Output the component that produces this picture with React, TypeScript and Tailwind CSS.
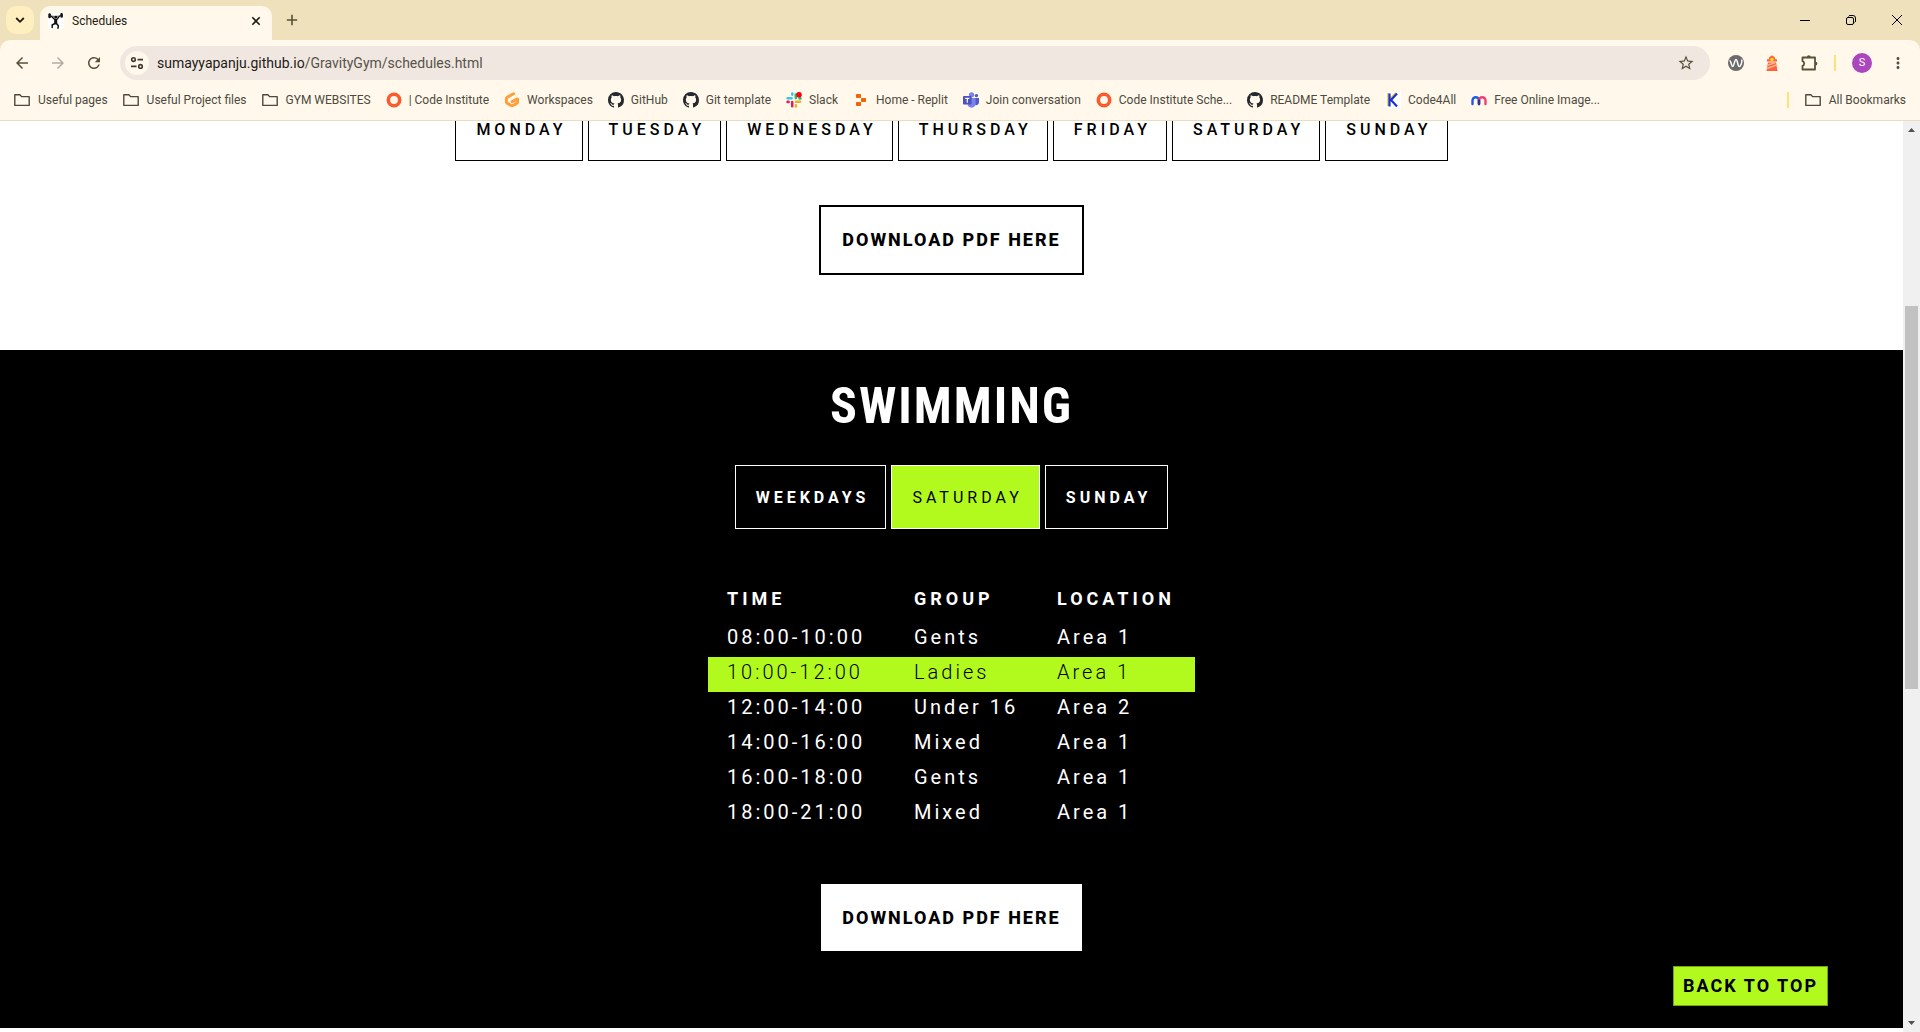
import { useState } from "react";
import type { ReactNode } from "react";
import { VscGithubInverted } from "react-icons/vsc";
import { MdArrowBack, MdArrowForward, MdRefresh, MdStarBorder, MdMoreVert } from "react-icons/md";

const GitHubMark = () => <VscGithubInverted className="size-4 text-[#24292f]" />;

const FolderIcon = () => (
  <svg viewBox="0 0 16 16" className="mr-px size-4" fill="none" stroke="#4d4a41" strokeWidth="1.4" strokeLinejoin="round">
    <path d="M.8 2.7h5.1l1.7 1.9h7.6v8.8H.8z" />
  </svg>
);

const RingIcon = () => (
  <svg viewBox="0 0 16 16" className="size-4" fill="none">
    <circle cx="8" cy="8" r="5.7" stroke="#fb5a2c" strokeWidth="3.6" />
  </svg>
);

const GitpodIcon = () => (
  <svg viewBox="0 0 16 16" className="size-4" fill="none" stroke="#ff9f3a" strokeWidth="3" strokeLinecap="round" strokeLinejoin="round">
    <path d="M9.6 1.8 3.4 5.1c-.7.4-1 .9-1 1.6v3c0 .8.4 1.3 1 1.7l3.700 2.100c.600.300 1.200.300 1.800 0l3.700-2.100c.600-.400 1-.900 1-1.700V6.900L8.200 9.600" />
  </svg>
);

const SlackIcon = () => (
  <svg viewBox="0 0 16 16" className="size-4" strokeWidth="2.6" strokeLinecap="round">
    <path d="M1.600 6.300h4M6.300 1.600v1" stroke="#36c5f0" />
    <path d="M9.800 2.500v3.600M13.600 6.400h.8" stroke="#2eb67d" />
    <path d="M10 9.800h4M9.900 13.400v1" stroke="#ecb22e" />
    <path d="M6.200 10v4.200M1.600 9.900h1" stroke="#e01e5a" />
    <circle cx="13" cy="2.800" r="2.800" fill="#fb0007" />
  </svg>
);

const ReplitIcon = () => (
  <svg viewBox="0 0 16 16" className="size-4" fill="#f26207">
    <rect x="3" y="2" width="5" height="4" rx=".8" />
    <rect x="8" y="6" width="5" height="4" rx=".8" />
    <rect x="3" y="10" width="5" height="4" rx=".8" />
  </svg>
);

const TeamsIcon = () => (
  <svg viewBox="0 0 16 16" className="size-4">
    <circle cx="8.5" cy="2.8" r="2.6" fill="#7b83eb" />
    <circle cx="13.4" cy="3.6" r="1.7" fill="#5059c9" />
    <path d="M11 6h5v4.6a2.7 2.7 0 0 1-4 2.2z" fill="#5059c9" />
    <path d="M4.500 6H12.600v5.600a4 4 0 0 1-8.100 0z" fill="#7b83eb" />
    <rect x="0" y="4" width="8.500" height="8.500" rx=".8" fill="#4b53bc" />
    <path d="M2.200 6.300h4.200M4.300 6.300v4.400" stroke="#fff" strokeWidth="1.200" />
  </svg>
);

const KIcon = () => (
  <svg viewBox="0 0 16 16" className="size-4" fill="none">
    <rect width="16" height="16" fill="#fff" />
    <path d="M3.200 1v13M4 8l7-7" stroke="#e8d21d" strokeWidth="2" />
    <path d="M4.500 1.500v13M12 1.500 6 8l6 6.500" stroke="#1a2fe0" strokeWidth="2.200" />
  </svg>
);

const MIcon = () => (
  <svg viewBox="0 0 16 16" className="size-4" fill="none" strokeWidth="2.400" strokeLinecap="round">
    <path d="M1.500 12V8.500a3.200 3.200 0 0 1 6.500 0V12" stroke="#1f5be0" />
    <path d="M8 12V8.500a3.200 3.200 0 0 1 6.500 0V12" stroke="#f43f6e" />
    <path d="M8 12V8.500" stroke="#2a2f9c" />
  </svg>
);

const LifterIcon = () => (
  <svg viewBox="0 0 16 16" className="size-4">
    <rect width="16" height="16" fill="#fff" />
    <g stroke="#111" fill="none" strokeLinecap="round">
      <path d="M2 2.800c4 .9 8 .9 11-.3" strokeWidth=".7" />
      <path d="M1.600 1.600v2.400M13.600 1.400v2" strokeWidth="2.600" />
      <path d="M3.600 3.500 6.500 6.300M11.300 3.300 9 6.300" strokeWidth="1.300" />
      <path d="M7.700 7v3" strokeWidth="3" />
      <path d="M6.800 10.500 4.200 12v2.600M8.500 10.500l1.800 2.300-.3 2.400" strokeWidth="1.500" />
    </g>
    <circle cx="7.800" cy="4.200" r="1.400" fill="#111" />
  </svg>
);

const bookmarks: { label: string; icon: ReactNode }[] = [
  { label: "Useful pages", icon: <FolderIcon /> },
  { label: "Useful Project files", icon: <FolderIcon /> },
  { label: "GYM WEBSITES", icon: <FolderIcon /> },
  { label: "| Code Institute", icon: <RingIcon /> },
  { label: "Workspaces", icon: <GitpodIcon /> },
  { label: "GitHub", icon: <GitHubMark /> },
  { label: "Git template", icon: <GitHubMark /> },
  { label: "Slack", icon: <SlackIcon /> },
  { label: "Home - Replit", icon: <ReplitIcon /> },
  { label: "Join conversation", icon: <TeamsIcon /> },
  { label: "Code Institute Sche...", icon: <RingIcon /> },
  { label: "README Template", icon: <GitHubMark /> },
  { label: "Code4All", icon: <KIcon /> },
  { label: "Free Online Image...", icon: <MIcon /> },
];

function TabStrip() {
  return (
    <div className="flex h-10 items-end bg-[#eee1bc] pl-[6px]">
      <button aria-label="Search tabs" className="mb-[6px] grid size-7 place-items-center rounded-[10px] bg-[#ffefc0]">
        <svg viewBox="0 0 10 10" className="size-[10px]" fill="none" stroke="#1f1c12" strokeWidth="1.800">
          <path d="m1.200 3 3.800 3.800L8.800 3" />
        </svg>
      </button>
      <div className="ml-[6px] flex h-[34px] w-[232px] items-center rounded-t-[10px] bg-[#fff8eb] pr-[10px] pb-1 pl-2 text-xs text-[#1f1c12]">
        <LifterIcon />
        <span className="ml-2 flex-1">Schedules</span>
        <button aria-label="Close tab" className="grid size-3 place-items-center">
          <svg viewBox="0 0 10 10" className="size-[10px]" stroke="#1f1c12" strokeWidth="1.600">
            <path d="m1.300 1.300 7.400 7.400M8.700 1.300 1.300 8.700" />
          </svg>
        </button>
      </div>
      <button aria-label="New tab" className="mb-[14px] ml-[14px] grid size-3 place-items-center">
        <svg viewBox="0 0 12 12" className="size-3" stroke="#57513a" strokeWidth="1.600">
          <path d="M6 .800v10.400M.800 6h10.400" />
        </svg>
      </button>
      <div className="ml-auto flex h-full items-center">
        <button aria-label="Minimize" className="grid w-[46px] place-items-center">
          <svg viewBox="0 0 10 10" className="size-[10px]" stroke="#000"><path d="M0 5.500h10" /></svg>
        </button>
        <button aria-label="Restore" className="grid w-[46px] place-items-center">
          <svg viewBox="0 0 10 10" className="size-[10px]" fill="none" stroke="#000">
            <rect x=".5" y="2.500" width="7" height="7" rx="1.500" />
            <path d="M2.500 1.500C2.800.800 3.400.500 4 .500h3A2.500 2.500 0 0 1 9.500 3v3c0 .800-.400 1.300-1 1.600" />
          </svg>
        </button>
        <button aria-label="Close window" className="grid w-[46px] place-items-center">
          <svg viewBox="0 0 10 10" className="size-[10px]" stroke="#000"><path d="m0 0 10 10M10 0 0 10" /></svg>
        </button>
      </div>
    </div>
  );
}

function Toolbar() {
  return (
    <div className="bg-[#eee1bc]">
      <div className="flex h-[46px] items-center rounded-t-[10px] bg-[#fff8eb] pr-[13px] pl-[13px] text-[#57513a]">
        <button aria-label="Back" className="grid size-[18px] place-items-center"><MdArrowBack className="size-[18px]" /></button>
        <button aria-label="Forward" className="ml-[18px] grid size-[18px] place-items-center text-[#b3ada0]"><MdArrowForward className="size-[18px]" /></button>
        <button aria-label="Reload" className="ml-[18px] grid size-[18px] place-items-center"><MdRefresh className="size-[18px]" /></button>
        <div className="ml-[17px] flex h-[34px] flex-1 items-center rounded-full bg-[#f0e7e1] pr-[15px] pl-[5px]">
          <button aria-label="View site information" className="grid size-6 place-items-center rounded-full bg-[#fff8eb]">
            <svg viewBox="0 0 14 14" className="size-[14px]" fill="none" stroke="#3f3b2d" strokeWidth="1.600">
              <circle cx="3.500" cy="3.600" r="1.800" />
              <path d="M7.500 3.600H13M1 10.400h5.500" />
              <circle cx="10.500" cy="10.400" r="1.800" />
            </svg>
          </button>
          <div className="ml-2 flex-1 text-sm text-[#57534a]">
            <span className="text-[#1d1b16]">sumayyapanju.github.io</span>/GravityGym/schedules.html
          </div>
          <button aria-label="Bookmark this tab"><MdStarBorder className="size-[18px]" /></button>
        </div>
        <div className="ml-[18px] flex items-center">
          <svg viewBox="0 0 16 16" className="size-4" fill="none">
            <circle cx="8" cy="8" r="8" fill="#6b6b6b" />
            <path d="M1.500 5.500c1.500 0 2 6 3.300 6S6.500 4.500 8 4.500s1.700 7 3.200 7 3-3.500 2.600-7" stroke="#fff" strokeWidth="1.500" />
          </svg>
          <svg viewBox="0 0 16 16" className="ml-5 size-4">
            <path d="M3 6.500V4.200h2V2.500L8 .3l3 2.200v1.700h2v2.300zM4 7.500h8l1.500 8.500h-11z" fill="#ff6238" />
            <circle cx="8" cy="4.400" r="1.700" fill="#ffe600" />
            <path d="m3 13.500 9.500-3.500M4 10l7-2.200" stroke="#ffb29a" strokeWidth="1.400" />
          </svg>
          <button aria-label="Extensions" className="ml-5">
            <svg viewBox="0 0 18 18" className="size-[18px]" fill="none" stroke="#57513a" strokeWidth="1.800">
              <path d="M2.500 3.500h12.500v12H2.500v-3.700a2.400 2.400 0 0 0 0-4.600z" strokeLinejoin="round" />
              <path d="M6.900 3.200a1.900 1.900 0 0 1 3.800 0zM15.500 7.700a1.900 1.900 0 0 1 0 3.800z" fill="#57513a" stroke="none" />
            </svg>
          </button>
          <div className="ml-4 h-4 w-[2px] bg-[#ffe07d]" />
          <button aria-label="Profile" className="ml-4 grid size-5 place-items-center rounded-full bg-[#ab47bc] text-[11px] text-white">S</button>
          <button aria-label="Menu" className="ml-[17px]"><MdMoreVert className="size-[18px]" /></button>
        </div>
      </div>
    </div>
  );
}

function BookmarksBar() {
  return (
    <nav aria-label="Bookmarks" className="flex h-[35px] items-center border-b border-[#e9ddbf] bg-[#fff8eb] pr-[14px] pb-[6px] pl-[14px] text-xs text-[#4d4a41]">
      {bookmarks.map((b) => (
        <a key={b.label} href="#" className="mr-[15px] flex items-center gap-[7px] whitespace-nowrap">
          {b.icon}
          {b.label}
        </a>
      ))}
      <div className="ml-auto h-4 w-[2px] bg-[#ffe07d]" />
      <a href="#" className="ml-4 flex items-center gap-[7px]">
        <FolderIcon />
        All Bookmarks
      </a>
    </nav>
  );
}

const days = ["MONDAY", "TUESDAY", "WEDNESDAY", "THURSDAY", "FRIDAY", "SATURDAY", "SUNDAY"];

const rows = [
  ["08:00-10:00", "Gents", "Area 1"],
  ["10:00-12:00", "Ladies", "Area 1"],
  ["12:00-14:00", "Under 16", "Area 2"],
  ["14:00-16:00", "Mixed", "Area 1"],
  ["16:00-18:00", "Gents", "Area 1"],
  ["18:00-21:00", "Mixed", "Area 1"],
];

function Page() {
  const [tab, setTab] = useState("SATURDAY");
  return (
    <main className="flex-1 overflow-hidden bg-white text-black">
      <section className="flex h-[229px] flex-col items-center">
        <div className="flex gap-[5px]">
          {days.map((d) => (
            <button key={d} className="h-10 border border-t-0 border-black pr-[15px] pb-[22px] pl-5 text-base leading-4 font-medium tracking-[4px]">
              {d}
            </button>
          ))}
        </div>
        <a href="#" className="mt-11 flex h-[70px] items-center border-2 border-black px-[21px] text-lg font-extrabold tracking-[2px]">
          DOWNLOAD PDF HERE
        </a>
      </section>
      <section className="flex h-[678px] flex-col items-center bg-black text-white">
        <h2 className="mt-6 font-['Roboto_Condensed','Liberation_Sans_Narrow',sans-serif] text-[50px] leading-[64px] font-bold tracking-[2px]">SWIMMING</h2>
        <div className="mt-[27px] flex gap-[5px]">
          {["WEEKDAYS", "SATURDAY", "SUNDAY"].map((d) => (
            <button
              key={d}
              onClick={() => setTab(d)}
              className={
                d === tab
                  ? "h-16 border border-white bg-[#b2fa1e] pt-[2px] pr-4 pl-5 text-base tracking-[4px] text-black"
                  : "h-16 border border-white pt-[2px] pr-4 pl-5 text-base font-bold tracking-[4px]"
              }
            >
              {d}
            </button>
          ))}
        </div>
        <table className="mt-[50px] text-left text-xl tracking-[3px]">
          <thead>
            <tr className="h-[43px] text-lg font-extrabold tracking-[4px]">
              <th className="w-[187px] pb-1 pl-[19px]">TIME</th>
              <th className="w-[143px] pb-1 pl-[19px]">GROUP</th>
              <th className="w-[157px] pb-1 pl-[19px]">LOCATION</th>
            </tr>
          </thead>
          <tbody>
            {rows.map((r, i) => (
              <tr key={r[0]} className={i === 1 ? "h-[35px] bg-[#b2fa1e] font-light text-black" : "h-[35px]"}>
                {r.map((c, j) => (
                  <td key={j} className="pb-[6px] pl-[19px]">{c}</td>
                ))}
              </tr>
            ))}
          </tbody>
        </table>
        <a href="#" className="mt-[52px] flex h-[67px] items-center bg-white px-[21px] text-lg font-extrabold tracking-[2px] text-black">
          DOWNLOAD PDF HERE
        </a>
      </section>
    </main>
  );
}

export default function App() {
  return (
    <div className="flex h-screen flex-col overflow-hidden font-['Roboto',sans-serif]">
      <header className="shrink-0">
        <TabStrip />
        <Toolbar />
        <BookmarksBar />
      </header>
      <div className="relative flex min-h-0 flex-1">
        <Page />
        <div className="flex w-[17px] flex-col items-center bg-[#f0f0f0]">
          <svg viewBox="0 0 17 17" className="h-[17px] w-[17px]" fill="#505050"><path d="m5 11 3.500-4 3.500 4z" /></svg>
          <div className="mt-[168px] h-[383px] w-[13px] bg-[#c1c1c1]" />
          <svg viewBox="0 0 17 17" className="mt-auto h-[17px] w-[17px]" fill="#505050"><path d="m5 6 3.500 4L12 6z" /></svg>
        </div>
        <a href="#" className="absolute right-[92px] bottom-[26px] flex h-10 items-center border border-[#76a514] bg-[#b2fa1e] px-[9px] text-lg font-bold tracking-[2px] text-black">
          BACK TO TOP
        </a>
      </div>
    </div>
  );
}
